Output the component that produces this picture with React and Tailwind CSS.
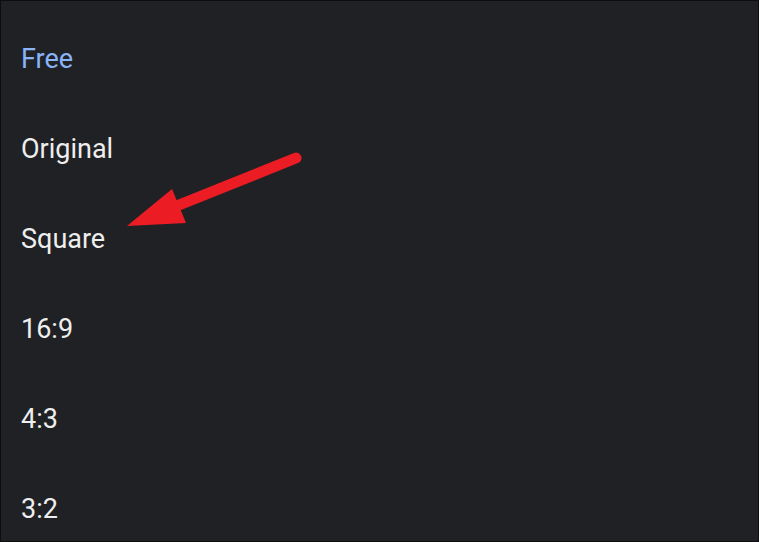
const options = ['Free', 'Original', 'Square', '16:9', '4:3', '3:2']

export default function App() {
  return (
    <div className="relative w-[759px] h-[542px] overflow-hidden bg-[#202124] border border-[#0d0d0e]" style={{ fontFamily: 'Roboto, "Noto Sans", sans-serif' }}>
      <ul className="pt-[13px]">
        {options.map((o, i) => (
          <li key={o} className={`h-[90px] flex items-center pl-[20px] text-[27px] ${i === 0 ? 'text-[#8ab4f8]' : 'text-[#eeeeee]'}`}>
            {o}
          </li>
        ))}
      </ul>
      <svg className="absolute left-0 top-0" width="759" height="542" viewBox="0 0 759 542">
        <line x1="295" y1="157" x2="178" y2="204" stroke="#ec1c24" strokeWidth="11" strokeLinecap="round" />
        <polygon points="126,225 171,188 185,222" fill="#ec1c24" />
      </svg>
    </div>
  )
}
